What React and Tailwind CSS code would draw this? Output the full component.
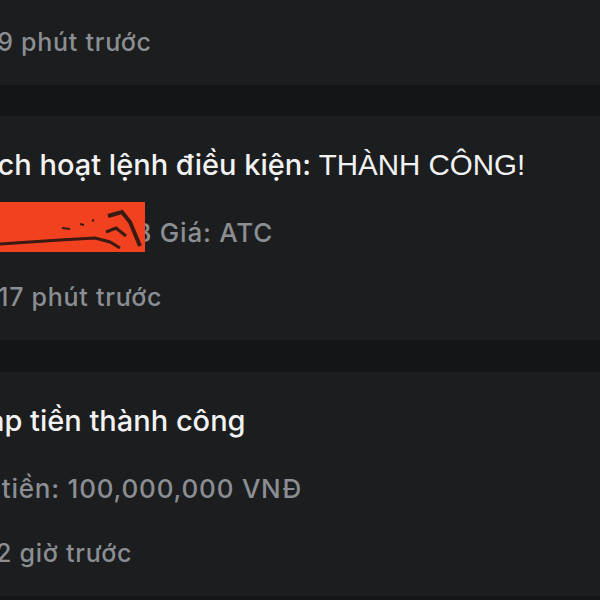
const Card = ({ title, titleCaps, sub, time, indent, redact, className = "" }) => (
  <div className={`relative bg-[#1c1d1f] pt-[29px] pb-[23px] flex flex-col gap-[28px] ${className}`}>
    <p
      className="text-[29px] font-medium leading-[40px] text-[#f2f2f2] whitespace-nowrap"
      style={{ marginLeft: -indent.title }}
    >
      {title}
      {titleCaps && <span className="font-['Liberation_Sans',sans-serif] font-normal text-[29.5px]">{titleCaps}</span>}
    </p>
    <p
      className="text-[26px] font-medium tracking-[0.03em] leading-[40px] text-[#8b8e92] whitespace-nowrap"
      style={{ marginLeft: -indent.sub }}
    >
      {sub}
    </p>
    <p
      className="text-[25px] font-medium tracking-[0.03em] leading-[40px] text-[#8b8e92] whitespace-nowrap -mt-[4px]"
      style={{ marginLeft: -indent.time }}
    >
      {time}
    </p>
    {redact && (
      <div className="absolute left-0 top-[86px] w-[145px] h-[50px] bg-[#f2411f] overflow-hidden">
        <svg width="145" height="50" viewBox="0 0 145 50" className="absolute inset-0">
          <path d="M0 42 L60 38 L95 36 L110 40 L120 46" stroke="#3a1a12" strokeWidth="3" fill="none" />
          <path d="M108 14 L122 10 L130 20 L140 44" stroke="#3a1a12" strokeWidth="4" fill="none" />
          <path d="M106 30 L116 26 L126 34" stroke="#3a1a12" strokeWidth="3" fill="none" />
          <path d="M62 26 L70 27 M80 22 L84 23 M92 18 L94 19" stroke="#3a1a12" strokeWidth="2" fill="none" />
        </svg>
      </div>
    )}
  </div>
);

export default function App() {
  return (
    <div className="w-[600px] h-[600px] overflow-hidden bg-[#141516] font-['Inter',sans-serif]">
      <Card
        className="-mt-[139px]"
        title="Kích hoạt lệnh điều kiện: "
        titleCaps="THÀNH CÔNG!"
        sub="Mã: VHM Giá: ATC"
        time="29 phút trước"
        indent={{ title: 30, sub: 0, time: 19 }}
      />
      <div className="h-[31px] bg-[#141516]" />
      <Card
        title="Kích hoạt lệnh điều kiện: "
        titleCaps="THÀNH CÔNG!"
        sub="Mã: SSSHB Giá: ATC"
        time="17 phút trước"
        indent={{ title: 30, sub: -5, time: 2 }}
        redact
      />
      <div className="h-[32px] bg-[#141516]" />
      <Card
        title="Nạp tiền thành công"
        sub="Số tiền: 100,000,000 VNĐ"
        time="2 giờ trước"
        indent={{ title: 34, sub: 40, time: 4 }}
      />
    </div>
  );
}
